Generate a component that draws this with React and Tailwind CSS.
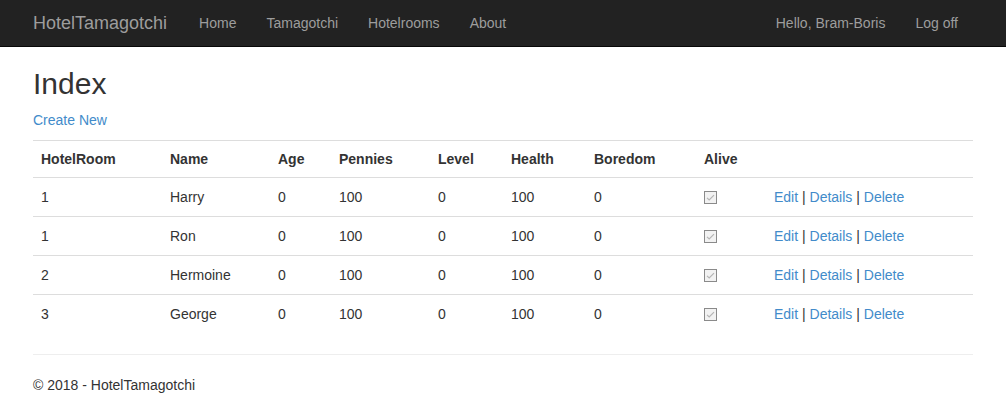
const rows = [
    { room: 1, name: 'Harry' },
    { room: 1, name: 'Ron' },
    { room: 2, name: 'Hermoine' },
    { room: 3, name: 'George' },
];

const cols = ['w-[129px]', 'w-[108px]', 'w-[61px]', 'w-[99px]', 'w-[73px]', 'w-[83px]', 'w-[110px]', 'w-[70px]', ''];

function CheckedBox() {
    return (
        <svg width="13" height="13" viewBox="0 0 13 13" className="block">
            <rect x="0.5" y="0.5" width="12" height="12" fill="#f2f2f2" stroke="#8a8a8a" />
            <path d="M3 6.8 L5.2 9 L10 4.2" fill="none" stroke="#b4b4b4" strokeWidth="1.2" />
        </svg>
    );
}

export default function App() {
    const headers = ['HotelRoom', 'Name', 'Age', 'Pennies', 'Level', 'Health', 'Boredom', 'Alive', ''];

    return (
        <div className="min-h-[414px] bg-white text-[14px] leading-[20px] text-[#333]" style={{ fontFamily: '"Liberation Sans", Arial, sans-serif' }}>
            <nav className="h-[47px] bg-[#222] border-b border-[#080808]">
                <div className="w-[970px] mx-auto px-[15px] flex items-center h-[46px] pb-[1px]">
                    <span className="text-[18px] text-[#9d9d9d] mr-[17px]">HotelTamagotchi</span>
                    <ul className="flex text-[#9d9d9d]">
                        <li className="px-[15px]">Home</li>
                        <li className="px-[15px]">Tamagotchi</li>
                        <li className="px-[15px]">Hotelrooms</li>
                        <li className="px-[15px]">About</li>
                    </ul>
                    <ul className="flex text-[#9d9d9d] ml-auto">
                        <li className="px-[15px]">Hello, Bram-Boris</li>
                        <li className="px-[15px]">Log off</li>
                    </ul>
                </div>
            </nav>
            <div className="w-[970px] mx-auto px-[15px]">
                <h2 className="mt-[20px] mb-[10px] text-[30px] leading-[33px] font-medium">Index</h2>
                <p className="mb-[10px]">
                    <a className="text-[#428bca]">Create New</a>
                </p>
                <table className="w-full border-collapse border-t border-[#ddd]">
                    <thead>
                        <tr className="border-b border-[#ddd]">
                            {headers.map((h, i) => (
                                <th key={i} className={`${cols[i]} p-[8px] text-left font-bold h-[36px]`}>{h}</th>
                            ))}
                        </tr>
                    </thead>
                    <tbody>
                        {rows.map((r, idx) => (
                            <tr key={idx} className={idx < rows.length - 1 ? 'border-b border-[#ddd]' : ''}>
                                <td className="px-[8px] h-[39px] align-middle">{r.room}</td>
                                <td className="px-[8px] align-middle">{r.name}</td>
                                <td className="px-[8px] align-middle">0</td>
                                <td className="px-[8px] align-middle">100</td>
                                <td className="px-[8px] align-middle">0</td>
                                <td className="px-[8px] align-middle">100</td>
                                <td className="px-[8px] align-middle">0</td>
                                <td className="px-[8px] align-middle"><CheckedBox /></td>
                                <td className="px-[8px] align-middle">
                                    <a className="text-[#428bca]">Edit</a> | <a className="text-[#428bca]">Details</a> | <a className="text-[#428bca]">Delete</a>
                                </td>
                            </tr>
                        ))}
                    </tbody>
                </table>
                <hr className="mt-[20px] mb-[20px] border-t border-[#eee]" />
                <footer>
                    <p>© 2018 - HotelTamagotchi</p>
                </footer>
            </div>
        </div>
    );
}
